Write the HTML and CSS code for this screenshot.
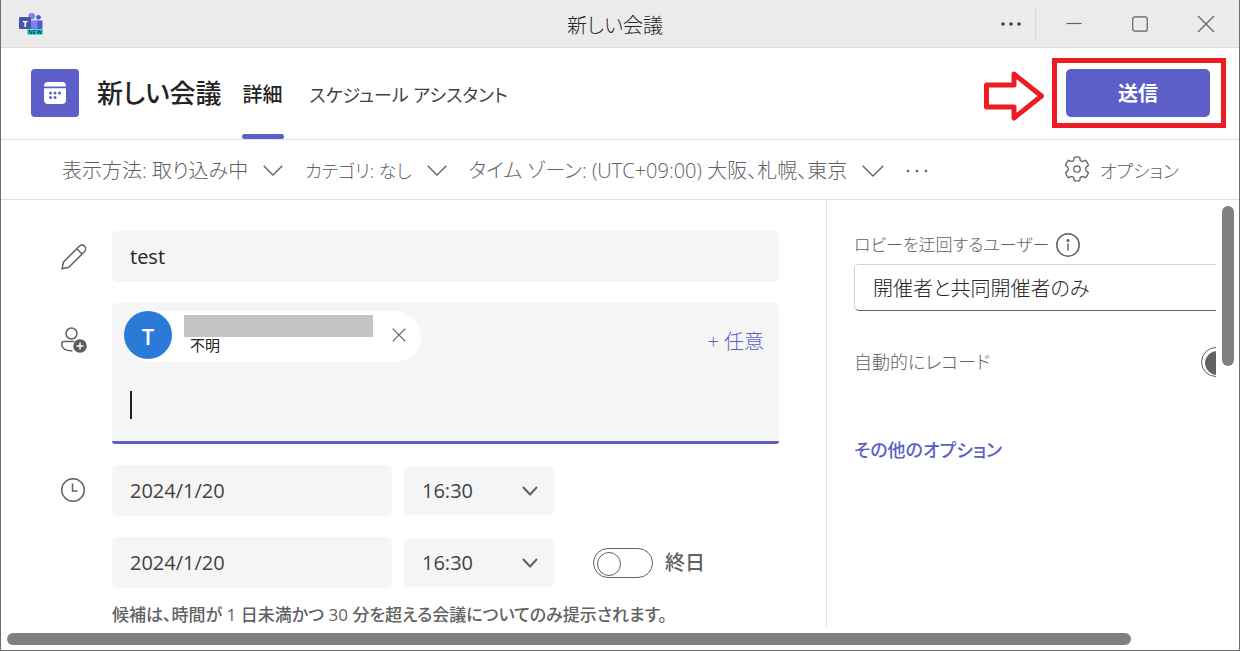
FILE: index.html
```html
<!DOCTYPE html>
<html lang="ja">
<head>
<meta charset="utf-8">
<meta name="viewport" content="width=device-width, initial-scale=1">
<title>新しい会議</title>
<link rel="stylesheet" href="styles.css">
</head>
<body>
<div class="window">
  <header class="titlebar">
    <svg class="logo" width="26" height="24" viewBox="0 0 26 24" aria-hidden="true">
      <circle cx="19.500" cy="5.300" r="2.400" fill="#5059c9"/>
      <path d="M16 8.500h7.500v6.500a4 4 0 0 1-7.500 2z" fill="#5059c9"/>
      <circle cx="12.800" cy="4.300" r="3.300" fill="#7b83eb"/>
      <path d="M8 8.500h10.500v9H11a4 4 0 0 1-3-4z" fill="#7b83eb"/>
      <rect x="0" y="5" width="12" height="12" rx="1" fill="#4b53a8"/>
      <text x="6" y="14.500" text-anchor="middle" class="logo-letter">T</text>
      <rect x="8" y="17" width="16" height="6" rx="1" fill="#3fe3e6"/>
      <text x="16" y="22.200" text-anchor="middle" class="logo-badge">NEW</text>
    </svg>
    <div class="titlebar-title">新しい会議</div>
    <div class="window-controls">
      <button class="control control-more" type="button" aria-label="その他">
        <svg width="20" height="4" viewBox="0 0 20 4"><g fill="#424242"><circle cx="2" cy="2" r="1.800"/><circle cx="10" cy="2" r="1.800"/><circle cx="18" cy="2" r="1.800"/></g></svg>
      </button>
      <span class="control-divider"></span>
      <button class="control" type="button" aria-label="最小化">
        <svg width="16" height="16" viewBox="0 0 16 16"><path d="M.500 7.500h15"/></svg>
      </button>
      <button class="control" type="button" aria-label="最大化">
        <svg width="16" height="16" viewBox="0 0 16 16"><rect x=".800" y=".800" width="14.400" height="14.400" rx="2"/></svg>
      </button>
      <button class="control" type="button" aria-label="閉じる">
        <svg width="18" height="18" viewBox="0 0 18 18"><path d="M1 1l16 16M17 1L1 17"/></svg>
      </button>
    </div>
  </header>

  <div class="meeting-header">
    <span class="meeting-icon">
      <svg width="22" height="22" viewBox="0 0 22 22" aria-hidden="true">
        <path d="M0 4.500V4a4 4 0 0 1 4-4h14a4 4 0 0 1 4 4v.500zM0 6.200h22V18a4 4 0 0 1-4 4H4a4 4 0 0 1-4-4z" fill="#fff"/>
        <g fill="#5b5fc7"><circle cx="6.500" cy="11" r="1.500"/><circle cx="11" cy="11" r="1.500"/><circle cx="15.500" cy="11" r="1.500"/><circle cx="6.500" cy="15.500" r="1.500"/><circle cx="11" cy="15.500" r="1.500"/></g>
      </svg>
    </span>
    <h1 class="meeting-title">新しい会議</h1>
    <nav class="tabs">
      <a class="tab tab-active" href="#details" aria-current="page">詳細</a>
      <a class="tab kana" href="#assistant">スケジュール アシスタント</a>
    </nav>
    <div class="send">
      <svg class="send-arrow" width="61" height="50" viewBox="0 0 61 50" aria-hidden="true">
        <path d="M2.500 14H30V3L57.500 25 30 47V36H2.500z" fill="#fff" stroke="#ed1c24" stroke-width="5" stroke-linejoin="round"/>
      </svg>
      <span class="send-frame"></span>
      <button class="send-button" type="button">送信</button>
    </div>
  </div>

  <div class="toolbar">
    <button class="tool" type="button">表示方法: 取り込み中
      <svg width="20" height="11" viewBox="0 0 20 11"><path d="M.700.700L10 10 19.300.700"/></svg></button>
    <button class="tool kana" type="button">カテゴリ: なし
      <svg width="20" height="11" viewBox="0 0 20 11"><path d="M.700.700L10 10 19.300.700"/></svg></button>
    <button class="tool" type="button">タイム ゾーン: (UTC+09:00) 大阪、札幌、東京
      <svg width="22" height="12" viewBox="0 0 22 12"><path d="M.700.700L11 11 21.300.700"/></svg></button>
    <button class="tool" type="button" aria-label="その他の操作">
      <svg width="22" height="4" viewBox="0 0 22 4"><g class="dots"><circle cx="2" cy="2" r="1.300"/><circle cx="11" cy="2" r="1.300"/><circle cx="20" cy="2" r="1.300"/></g></svg></button>
    <button class="tool tool-options kana" type="button">
      <svg width="26" height="26" viewBox="0 0 26 26"><path d="M10.300 1.300Q13 .600 15.700 1.300L16.300 4.500Q17.300 5.600 18.700 5.300L21.500 4.300Q23.600 6.300 24.400 9.200L22.200 11.200Q21.200 13 22.200 14.800L24.400 16.800Q23.600 19.700 21.500 21.700L18.700 20.700Q17.300 20.400 16.300 21.500L15.700 24.700Q13 25.400 10.300 24.700L9.700 21.500Q8.700 20.400 7.300 20.700L4.500 21.700Q2.400 19.700 1.600 16.800L3.800 14.800Q4.800 13 3.800 11.200L1.600 9.200Q2.400 6.300 4.500 4.300L7.300 5.300Q8.700 5.600 9.700 4.500z"/><circle cx="13" cy="13" r="3.200"/></svg>
      オプション</button>
  </div>

  <main class="content">
    <form class="form">
      <div class="row">
        <svg class="row-icon" width="26" height="26" viewBox="0 0 26 26" aria-hidden="true"><path d="M1 24.800L2.500 18 18.300 2.200A3.700 3.700 0 0 1 23.600 7.500L7.800 23.300zM15.800 4.700L21.100 10"/></svg>
        <input class="field field-title" type="text" value="test" aria-label="タイトル">
      </div>

      <div class="row row-people">
        <svg class="row-icon" width="26" height="28" viewBox="0 0 26 28" aria-hidden="true"><circle cx="10.500" cy="7.500" r="5.500"/><path d="M11.500 24.700C4 25 .800 22 .800 18.500V17.500Q.800 15.500 3 15.500H13"/><circle cx="19" cy="20" r="6.800" fill="#5c5c5c" stroke="none"/><path d="M19 16.500v7M15.500 20h7" stroke="#fff"/></svg>
        <div class="people">
          <div class="people-main">
            <div class="chip">
              <span class="avatar">T</span>
              <span class="chip-text"><span class="chip-mask"></span><span class="chip-status">不明</span></span>
              <button class="chip-remove" type="button" aria-label="削除">
                <svg width="14" height="14" viewBox="0 0 14 14"><path d="M.700.700l12.600 12.600M13.300.700L.700 13.300"/></svg>
              </button>
            </div>
            <div class="people-entry"><span class="caret"></span><input class="people-input" type="text" aria-label="出席者"></div>
          </div>
          <button class="optional" type="button">+ 任意</button>
        </div>
      </div>

      <div class="row">
        <svg class="row-icon" width="26" height="26" viewBox="0 0 26 26" aria-hidden="true"><circle cx="12" cy="12" r="11.300"/><path d="M11.500 5.500V13h5"/></svg>
        <div class="when">
          <input class="field date" type="text" value="2024/1/20" aria-label="開始日">
          <div class="time"><select class="field time-select" aria-label="開始時刻"><option>16:30</option></select>
            <svg class="time-chevron" width="16" height="10" viewBox="0 0 16 10"><path d="M1 1l7 7.500L15 1"/></svg></div>
        </div>
      </div>

      <div class="row">
        <div class="when when-end">
          <input class="field date" type="text" value="2024/1/20" aria-label="終了日">
          <div class="time"><select class="field time-select" aria-label="終了時刻"><option>16:30</option></select>
            <svg class="time-chevron" width="16" height="10" viewBox="0 0 16 10"><path d="M1 1l7 7.500L15 1"/></svg></div>
          <label class="allday"><input class="switch" type="checkbox">終日</label>
        </div>
      </div>
      <p class="hint">候補は、時間が <span class="hint-number">1</span> 日未満かつ <span class="hint-number">30</span> 分を超える会議についてのみ提示されます。</p>
    </form>

    <aside class="side">
      <div class="side-body">
        <div class="lobby-label"><label for="lobby">ロビーを迂回するユーザー</label>
          <svg width="24" height="24" viewBox="0 0 24 24" aria-hidden="true"><circle cx="12" cy="12" r="11.200"/><path d="M12 10.500v7"/><circle cx="12" cy="7.500" r=".800"/></svg></div>
        <select class="lobby" id="lobby"><option>開催者と共同開催者のみ</option></select>
        <label class="record kana">自動的にレコード<input class="switch switch-filled" type="checkbox"></label>
        <a class="more-link kana" href="#options">その他のオプション</a>
      </div>
    </aside>
    <div class="scroll-y"><div class="thumb-y"></div></div>
  </main>
  <div class="scroll-x"><div class="thumb-x"></div></div>
</div>
</body>
</html>
```
FILE: styles.css
```css
* { box-sizing: border-box; }

body {
  margin: 0;
  background: #fff;
  color: #616161;
  font: 300 20px/28px "Open Sans", "Noto Sans CJK JP", sans-serif;
  font-feature-settings: "palt";
}

button, input, select {
  margin: 0;
  padding: 0;
  border: 0;
  background: none;
  color: inherit;
  font: inherit;
  font-feature-settings: inherit;
}

svg {
  flex: none;
  fill: none;
  stroke: #616161;
  stroke-width: 1.5;
}

svg .dots { fill: #616161; stroke: none; }

.kana { font-size: 18px; }

.window {
  display: flex;
  flex-direction: column;
  min-height: 100vh;
  border: 1px solid #6e6e6e;
  border-top: 0;
  overflow: hidden;
}

/* Title bar */
.titlebar {
  display: grid;
  grid-template-columns: 1fr auto 1fr;
  align-items: center;
  height: 48px;
  background: #ebebeb;
  border-bottom: 1px solid #dcdcdc;
}

.logo { margin-left: 18px; stroke: none; }
.logo-letter { fill: #fff; font: bold 9px "Open Sans", sans-serif; }
.logo-badge { fill: #07343c; font: bold 6px "Open Sans", sans-serif; }

.titlebar-title { margin-right: 10px; padding-top: 4px; color: #242424; }

.window-controls { display: flex; align-items: center; justify-content: flex-end; }
.control { display: grid; place-items: center; width: 66px; height: 46px; }
.control svg { stroke-width: 1.2; }
.control-more { width: 48px; }
.control-more svg { stroke: none; }
.control-divider { width: 1px; height: 30px; margin-right: 5px; background: #d8d8d8; }

/* Meeting header */
.meeting-header {
  display: flex;
  align-items: center;
  height: 92px;
  padding: 0 29px 1px 30px;
  border-bottom: 1px solid #e0e0e0;
}

.meeting-icon {
  display: grid;
  place-items: center;
  width: 48px;
  height: 48px;
  border-radius: 4px;
  background: #5b5fc7;
}
.meeting-icon svg { stroke: none; }

.meeting-title {
  margin: 0 20px 0 18px;
  color: #242424;
  font-size: 26px;
  font-weight: 500;
  line-height: 36px;
}

.tabs { display: flex; align-self: stretch; gap: 26px; margin-bottom: -1px; }
.tab {
  display: flex;
  align-items: center;
  padding-top: 2px;
  color: #424242;
  font-weight: 400;
  text-decoration: none;
}
.tab-active { position: relative; padding: 2px 1px 0; color: #242424; font-weight: 500; }
.tab-active::after {
  content: "";
  position: absolute;
  inset: auto 0 0;
  height: 5px;
  border-radius: 3px;
  background: #5b5fc7;
}

.send { position: relative; margin-left: auto; }
.send-button {
  display: block;
  width: 144px;
  height: 48px;
  padding-top: 2px;
  border-radius: 5px;
  background: #5b5fc7;
  color: #fff;
  font-weight: 700;
}
.send-frame { position: absolute; inset: -11px -16px -11px -14px; border: 5px solid #ed1c24; }
.send-arrow { position: absolute; top: 2px; right: 165px; }

/* Toolbar */
.toolbar {
  display: flex;
  align-items: center;
  gap: 22px;
  height: 60px;
  padding: 2px 60px 0 61px;
  border-bottom: 1px solid #e0e0e0;
}
.tool { display: flex; align-items: center; gap: 15px; white-space: nowrap; }
.tool svg { stroke-width: 1.3; }
.tool-options { gap: 10px; margin-left: auto; }
.tool-options svg { margin-bottom: 4px; }

/* Content */
.content {
  flex: 1;
  display: grid;
  grid-template-columns: minmax(0, 826fr) minmax(0, 389fr) 23px;
}

.form {
  display: flex;
  flex-direction: column;
  gap: 21px;
  padding: 31px 47px 0 60px;
  border-right: 1px solid #e0e0e0;
}

.row {
  display: grid;
  grid-template-columns: 26px minmax(0, 1fr);
  gap: 25px;
  align-items: center;
}
.row-people { align-items: start; }
.row-people .row-icon { margin-top: 23px; }

.field {
  width: 100%;
  height: 51px;
  padding: 0 18px;
  border-radius: 5px;
  background: #f5f5f5;
  color: #424242;
  font-weight: 400;
}
.field-title { color: #242424; }

.people {
  display: flex;
  align-items: flex-start;
  justify-content: space-between;
  padding: 8px 15px 22px 12px;
  border-bottom: 3px solid #5b5fc7;
  border-radius: 5px 5px 3px 3px;
  background: #f5f5f5;
}
.chip {
  display: flex;
  gap: 12px;
  height: 51px;
  padding-right: 15px;
  border-radius: 26px;
  background: #fff;
}
.avatar {
  display: grid;
  place-items: center;
  width: 48px;
  height: 48px;
  padding-top: 2px;
  border-radius: 50%;
  background: #2b7ad8;
  color: #fff;
  font-size: 22px;
  font-weight: 600;
}
.chip-text { display: flex; flex-direction: column; padding-top: 4px; }
.chip-mask { width: 189px; height: 22px; background: #c4c4c4; }
.chip-status { padding-left: 6px; color: #242424; font-size: 15px; font-weight: 400; line-height: 16px; }
.chip-remove { display: grid; place-items: center; width: 14px; height: 48px; margin-left: 7px; }
.chip-remove svg { stroke-width: 1.2; }

.people-entry { display: flex; align-items: center; height: 28px; margin: 29px 0 0 6px; }
.caret { width: 2px; height: 28px; background: #242424; }
.people-input { flex: 1; min-width: 0; outline: none; }
.optional { margin-top: 17px; color: #5b5fc7; }

.when { display: flex; align-items: center; gap: 12px; }
.when-end { grid-column: 2; }
.date { flex: 0 1 280px; min-width: 0; }
.time { position: relative; flex: 0 0 150px; display: flex; }
.time-select { appearance: none; height: 48px; }
.time-chevron { position: absolute; top: 19px; right: 16px; pointer-events: none; stroke-width: 2; }

.allday { display: flex; align-items: center; gap: 12px; margin-left: 27px; font-weight: 500; white-space: nowrap; }

.switch {
  appearance: none;
  flex: none;
  width: 60px;
  height: 30px;
  padding: 3px;
  border: 1px solid #616161;
  border-radius: 15px;
}
.switch::before {
  content: "";
  display: block;
  width: 22px;
  height: 22px;
  border: 1px solid #616161;
  border-radius: 50%;
}
.switch-filled::before { background: #616161; }

.hint {
  margin: -6px 0 0 51px;
  font-size: 17px;
  font-weight: 500;
  line-height: 24px;
  white-space: nowrap;
}
.hint-number { font-weight: 400; }

/* Side panel */
.side { overflow: hidden; }
.side-body {
  display: flex;
  flex-direction: column;
  align-items: stretch;
  margin-right: -45px;
  padding: 31px 0 0 27px;
}
.lobby-label { display: flex; align-items: center; gap: 7px; font-size: 17px; }
.lobby {
  appearance: none;
  height: 47px;
  margin-top: 5px;
  padding: 2px 18px 0;
  border: 1px solid #d1d1d1;
  border-bottom-color: #616161;
  border-radius: 5px;
  color: #242424;
}
.record { display: flex; align-items: center; justify-content: space-between; margin-top: 36px; }
.more-link { align-self: flex-start; margin-top: 59px; color: #5b5fc7; font-weight: 500; text-decoration: none; }

/* Scroll bars */
.scroll-y { padding: 6px 5px 0 6px; }
.thumb-y { height: 160px; border-radius: 6px; background: #808080; }
.scroll-x { padding: 6px 108px 5px 6px; }
.thumb-x { height: 12px; border-radius: 6px; background: #808080; }
```
